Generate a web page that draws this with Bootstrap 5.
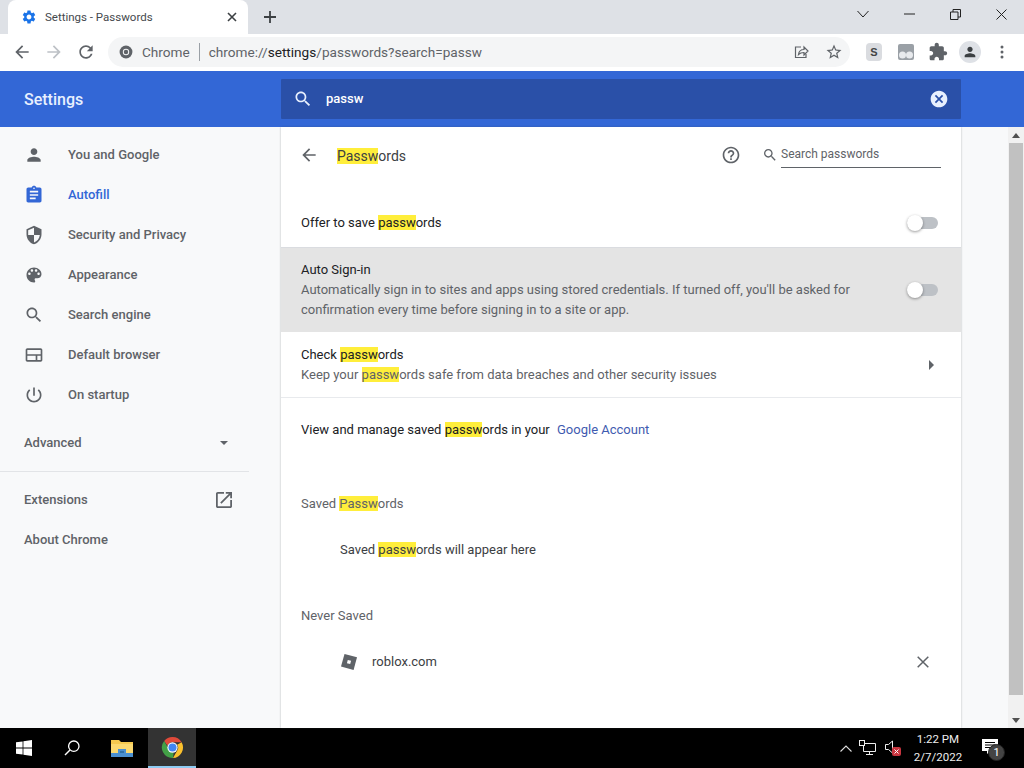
<!DOCTYPE html>
<html lang="en">
<head>
  <meta charset="UTF-8" />
  <meta name="viewport" content="width=device-width, initial-scale=1" />
  <title>Settings - Passwords</title>
  <link href="https://cdn.jsdelivr.net/npm/bootstrap@5.3.2/dist/css/bootstrap.min.css" rel="stylesheet" />
  <style>
    html, body { height: 768px; overflow: hidden; }
    body { font-family: Roboto, "Liberation Sans", sans-serif; font-size: 13px; line-height: 20px; color: #202124; background: #f8f9fa; }
    svg { display: block; flex: none; fill: currentColor; }

    /* browser chrome */
    .tab-strip { height: 34px; background: #dee1e6; padding-left: 8px; color: #3c4043; }
    .tab-item { width: 240px; height: 34px; background: #fff; border-radius: 8px 8px 0 0; padding: 0 11px 0 13px; font-size: 11.5px; color: #45494d; }
    .tab-gear { color: #1a73e8; }
    .new-tab { margin-left: 15px; }
    .win-btns { margin-top: -6px; }
    .win-btn { width: 46px; }
    .tool-bar { height: 37px; background: #fff; padding: 0 0 1px 12px; color: #5f6368; }
    .nav-ico { width: 20px; margin-right: 12px; }
    .nav-off { color: #bdc1c6; }
    .omni { width: 742px; height: 30px; background: #f4f5f6; border-radius: 15px; padding: 0 7px 0 11px; font-size: 13.6px; }
    .omni-name { margin-left: 9px; }
    .omni-sep { width: 1px; height: 18px; background: #9aa0a6; margin: 0 9px; }
    .omni-url b { font-weight: 400; color: #202124; }
    .omni-star { margin-left: 16px; }
    .ext-s { width: 16px; height: 18px; margin-left: 16px; border-radius: 4px; background: #dadce0; font: 700 11px/18px "Liberation Sans", sans-serif; color: #444; text-align: center; }
    .ext-tab { margin-left: 16px; }
    .ext-puzzle { margin-left: 14px; }
    .avatar-btn { width: 22px; height: 22px; margin-left: 11px; border-radius: 50%; background: #dee1e6; color: #3c4043; }
    .menu-dots { margin-left: 19px; }

    /* settings header */
    .app-head { height: 56px; background: #3367d6; color: #fff; }
    .app-title { width: 281px; padding-left: 24px; padding-top: 1px; font-size: 16px; font-weight: 500; color: #e8f0fe; }
    .app-search { width: 680px; height: 40px; background: #2a50a8; border-radius: 1px; padding: 0 12px; font-weight: 500; }
    .app-search svg { color: #e8f0fe; }
    .app-query { margin-left: 13px; }

    /* sidebar */
    .app-body { height: 601px; }
    .side-nav { width: 281px; padding-top: 8px; color: #5f6368; font-weight: 500; }
    .side-item { height: 40px; padding-left: 24px; }
    .side-item svg { margin-right: 24px; }
    .side-item.active { color: #3367d6; }
    .side-plain { height: 40px; padding: 0 49px 0 24px; }
    .side-adv { margin-top: 8px; padding-right: 53px; }
    .side-rule { width: 249px; height: 1px; background: #e2e4e7; margin: 8px 0; }

    /* passwords page */
    .page-panel { width: 680px; background: #fff; box-shadow: 0 0 2px rgba(60,64,67,.35); }
    .page-head { height: 58px; margin-bottom: 13px; padding: 0 20px; }
    .head-ico { color: #5f6368; margin-top: -2px; }
    .head-back { margin-left: -2px; }
    .head-help { margin-right: 21px; }
    .head-find { margin-right: 3px; }
    .page-title { font-size: 14px; margin: -1px 0 0 18px; color: #3c4043; }
    .pw-search { width: 160px; height: 24px; border-bottom: 1px solid #5f6368; color: #5f6368; font-size: 12px; }
    .hl { background: #ffee3b; }
    .set-row { padding: 0 20px; }
    .row-offer { height: 50px; border-bottom: 1px solid #dadce0; }
    .row-auto { height: 84px; background: #e4e4e4; }
    .row-check { height: 66px; border-bottom: 1px solid #e8eaed; }
    .row-view { height: 64px; }
    .sub-text { color: #5f6368; }
    .sw-track { width: 31px; height: 12px; border-radius: 6px; background: #bdc1c6; position: relative; flex: none; margin-right: 3px; }
    .sw-knob { width: 16px; height: 16px; border-radius: 50%; background: #fff; box-shadow: 0 1px 3px rgba(0,0,0,.4); position: absolute; left: 0; top: -2px; }
    .row-arrow { color: #5f6368; margin-right: 7px; }
    .acct-link { color: #3f5bb0; margin-left: 4px; text-decoration: none; }
    .sec-title { height: 40px; padding: 0 20px; color: #5f6368; }
    .sec-saved { margin-top: 22px; }
    .sec-never { margin-top: 26px; }
    .empty-line { height: 40px; padding-left: 59px; margin-top: 6px; color: #3c4043; }
    .site-row { height: 52px; padding: 0 32px 0 60px; color: #3c4043; }
    .site-ico { width: 16px; height: 16px; margin-right: 15px; }

    /* page scrollbar */
    .page-gap { width: 47px; }
    .scroll-bar { width: 16px; background: #f1f1f1; color: #505050; }
    .scroll-thumb { flex: 1; background: #c1c1c1; width: 14px; margin: 0 1px 17px; }
    .scroll-arrow { height: 16px; }

    /* windows taskbar */
    .task-bar { height: 40px; background: #000; color: #fff; }
    .task-btn { width: 48px; height: 40px; }
    .task-wide { width: 52px; }
    .task-active { background: #333; border-bottom: 2px solid #8ecbf2; }
    .tray { margin-right: 14px; }
    .tray-net { margin-left: 7px; }
    .tray-sound { position: relative; margin-left: 9px; width: 17px; height: 16px; }
    .tray-mute { position: absolute; left: 7px; top: 7px; }
    .task-clock { width: 72px; font-size: 11.5px; line-height: 18px; text-align: center; color: #eee; }
    .notif-wrap { width: 36px; height: 40px; position: relative; }
    .notif-ico { margin: -4px 4px 0 0; }
    .notif-count { position: absolute; left: 14px; top: 16px; width: 17px; height: 17px; border-radius: 50%; background: #444; border: 1px solid #222; font-size: 11px; line-height: 15px; text-align: center; color: #fff; }
  </style>
</head>
<body>
  <!-- Tabs -->
  <div class="tab-strip d-flex align-items-center">
    <div class="tab-item d-flex align-items-center">
      <svg class="tab-gear" width="16" height="16" viewBox="0 0 24 24"><path d="M19.14 12.94c.04-.3.06-.61.06-.94 0-.32-.02-.64-.07-.94l2.03-1.58a.49.49 0 0 0 .12-.61l-1.92-3.32a.488.488 0 0 0-.59-.22l-2.39.96c-.5-.38-1.03-.7-1.62-.94l-.36-2.54a.484.484 0 0 0-.48-.41h-3.84c-.24 0-.43.17-.47.41l-.36 2.54c-.59.24-1.13.57-1.62.94l-2.39-.96c-.22-.08-.47 0-.59.22L2.74 8.87c-.12.21-.08.47.12.61l2.03 1.58c-.05.3-.09.63-.09.94s.02.64.07.94l-2.03 1.58a.49.49 0 0 0-.12.61l1.92 3.32c.12.22.37.29.59.22l2.39-.96c.5.38 1.03.7 1.62.94l.36 2.54c.05.24.24.41.48.41h3.84c.24 0 .44-.17.47-.41l.36-2.54c.59-.24 1.13-.56 1.62-.94l2.39.96c.22.08.47 0 .59-.22l1.92-3.32c.12-.22.07-.47-.12-.61l-2.01-1.58zM12 15.6c-1.98 0-3.6-1.62-3.6-3.6s1.62-3.6 3.6-3.6 3.6 1.62 3.6 3.6-1.62 3.6-3.6 3.6z"/></svg>
      <span class="ms-2 flex-grow-1">Settings - Passwords</span>
      <svg width="10" height="10" viewBox="0 0 10 10"><path d="M1 1l8 8M9 1l-8 8" stroke="#3c4043" stroke-width="1.6" fill="none"/></svg>
    </div>
    <svg class="new-tab" width="14" height="14" viewBox="0 0 14 14"><path d="M7 1v12M1 7h12" stroke="#3c4043" stroke-width="1.8" fill="none"/></svg>
    <div class="win-btns ms-auto d-flex align-items-center">
      <div class="win-btn d-flex justify-content-center"><svg width="12" height="8" viewBox="0 0 12 8"><path d="M.5 1l5.500 6 5.500-6" stroke="#222" fill="none"/></svg></div>
      <div class="win-btn d-flex justify-content-center"><svg width="11" height="2" viewBox="0 0 11 2"><path d="M0 1h11" stroke="#222" fill="none"/></svg></div>
      <div class="win-btn d-flex justify-content-center"><svg width="11" height="11" viewBox="0 0 11 11"><path d="M.5 3H8v7.500H.5zM3 3V.5h7.500V8H8" stroke="#222" fill="none"/></svg></div>
      <div class="win-btn d-flex justify-content-center"><svg width="11" height="11" viewBox="0 0 11 11"><path d="M.5.5l10 10M10.500.5l-10 10" stroke="#222" fill="none"/></svg></div>
    </div>
  </div>

  <!-- Toolbar -->
  <div class="tool-bar d-flex align-items-center">
    <svg class="nav-ico" width="20" height="20" viewBox="0 0 24 24"><path d="M20 11H7.830l5.590-5.590L12 4l-8 8 8 8 1.410-1.410L7.830 13H20v-2z"/></svg>
    <svg class="nav-ico nav-off" width="20" height="20" viewBox="0 0 24 24"><path d="M12 4l-1.410 1.410L16.170 11H4v2h12.170l-5.580 5.590L12 20l8-8z"/></svg>
    <svg class="nav-ico" width="20" height="20" viewBox="0 0 24 24"><path d="M17.650 6.350C16.200 4.900 14.210 4 12 4c-4.420 0-7.990 3.580-7.990 8s3.570 8 7.990 8c3.730 0 6.840-2.550 7.730-6h-2.080c-.82 2.330-3.040 4-5.650 4-3.310 0-6-2.690-6-6s2.690-6 6-6c1.660 0 3.140.69 4.220 1.780L13 11h7V4l-2.350 2.350z"/></svg>
    <div class="omni d-flex align-items-center">
      <svg width="14" height="14" viewBox="0 0 24 24"><circle cx="12" cy="12" r="11"/><circle cx="12" cy="12" r="5.500" fill="#f4f5f6"/><circle cx="12" cy="12" r="3.800"/></svg>
      <span class="omni-name">Chrome</span>
      <span class="omni-sep"></span>
      <span class="omni-url">chrome://<b>settings</b>/passwords?search=passw</span>
      <svg class="ms-auto" width="16" height="16" viewBox="0 0 16 16"><path d="M8 3H2.500v10.500H13V10" stroke="#5f6368" stroke-width="1.200" fill="none"/><path d="M5.500 10.500c.4-3 2.500-5 5.500-5V3l4 4-4 4V8.500c-2.200 0-4 .5-5.500 2z" stroke="#5f6368" stroke-width="1.200" fill="none"/></svg>
      <svg class="omni-star" width="18" height="18" viewBox="0 0 24 24"><path d="M22 9.240l-7.190-.62L12 2 9.190 8.630 2 9.240l5.460 4.730L5.820 21 12 17.270 18.180 21l-1.630-7.030L22 9.240zM12 15.400l-3.760 2.270 1-4.280-3.320-2.880 4.380-.38L12 6.100l1.710 4.040 4.380.38-3.320 2.880 1 4.280L12 15.400z"/></svg>
    </div>
    <div class="ext-s">S</div>
    <svg class="ext-tab" width="16" height="16" viewBox="0 0 16 16"><rect width="16" height="16" rx="2" fill="#9aa0a6"/><circle cx="4.500" cy="11" r="3.500" fill="#e8eaed"/><circle cx="11.500" cy="11" r="3.500" fill="#e8eaed"/></svg>
    <svg class="ext-puzzle" width="20" height="20" viewBox="0 0 24 24"><path d="M20.500 11H19V7c0-1.100-.9-2-2-2h-4V3.500C13 2.120 11.880 1 10.500 1S8 2.120 8 3.500V5H4c-1.100 0-1.990.9-1.990 2v3.800H3.500c1.490 0 2.700 1.210 2.700 2.700s-1.210 2.700-2.700 2.700H2V20c0 1.100.9 2 2 2h3.800v-1.500c0-1.490 1.210-2.700 2.700-2.700 1.490 0 2.700 1.210 2.700 2.700V22H17c1.100 0 2-.9 2-2v-4h1.500c1.380 0 2.500-1.120 2.500-2.500S21.880 11 20.500 11z"/></svg>
    <div class="avatar-btn d-flex align-items-center justify-content-center"><svg width="16" height="16" viewBox="0 0 24 24"><path d="M12 12c2.210 0 4-1.790 4-4s-1.790-4-4-4-4 1.790-4 4 1.790 4 4 4zm0 2c-2.670 0-8 1.340-8 4v2h16v-2c0-2.660-5.330-4-8-4z"/></svg></div>
    <svg class="menu-dots" width="4" height="14" viewBox="0 0 4 14"><circle cx="2" cy="2" r="1.500"/><circle cx="2" cy="7" r="1.500"/><circle cx="2" cy="12" r="1.500"/></svg>
  </div>

  <!-- Settings header -->
  <div class="app-head d-flex align-items-center">
    <div class="app-title">Settings</div>
    <div class="app-search d-flex align-items-center">
      <svg width="20" height="20" viewBox="0 0 24 24"><path d="M15.500 14h-.79l-.28-.27C15.410 12.590 16 11.110 16 9.500 16 5.910 13.090 3 9.500 3S3 5.910 3 9.500 5.910 16 9.500 16c1.610 0 3.090-.59 4.230-1.570l.27.280v.79l5 4.990L20.490 19l-4.990-5zm-6 0C7.010 14 5 11.990 5 9.500S7.010 5 9.500 5 14 7.010 14 9.500 11.990 14 9.500 14z"/></svg>
      <span class="app-query flex-grow-1">passw</span>
      <svg width="20" height="20" viewBox="0 0 24 24"><path d="M12 2C6.470 2 2 6.470 2 12s4.470 10 10 10 10-4.470 10-10S17.530 2 12 2zm5 13.590L15.590 17 12 13.410 8.410 17 7 15.590 10.590 12 7 8.410 8.410 7 12 10.590 15.590 7 17 8.410 13.410 12 17 15.590z"/></svg>
    </div>
  </div>

  <div class="app-body d-flex">
    <!-- Sidebar -->
    <nav class="side-nav">
      <div class="side-item d-flex align-items-center"><svg width="20" height="20" viewBox="0 0 24 24"><path d="M12 12c2.210 0 4-1.790 4-4s-1.790-4-4-4-4 1.790-4 4 1.790 4 4 4zm0 2c-2.670 0-8 1.340-8 4v2h16v-2c0-2.660-5.330-4-8-4z"/></svg>You and Google</div>
      <div class="side-item active d-flex align-items-center"><svg width="20" height="20" viewBox="0 0 24 24"><path d="M19 3h-4.180C14.400 1.840 13.300 1 12 1c-1.300 0-2.400.84-2.820 2H5c-1.100 0-2 .9-2 2v14c0 1.100.9 2 2 2h14c1.100 0 2-.9 2-2V5c0-1.100-.9-2-2-2zm-7 0c.55 0 1 .45 1 1s-.45 1-1 1-1-.45-1-1 .45-1 1-1zm2 14H7v-2h7v2zm3-4H7v-2h10v2zm0-4H7V7h10v2z"/></svg>Autofill</div>
      <div class="side-item d-flex align-items-center"><svg width="20" height="20" viewBox="0 0 24 24"><path d="M12 1L3 5v6c0 5.550 3.840 10.740 9 12 5.160-1.260 9-6.450 9-12V5l-9-4zm0 10.990h7c-.53 4.120-3.280 7.790-7 8.940V12H5V6.300l7-3.110v8.800z"/></svg>Security and Privacy</div>
      <div class="side-item d-flex align-items-center"><svg width="20" height="20" viewBox="0 0 24 24"><path d="M12 3c-4.970 0-9 4.030-9 9s4.030 9 9 9c.83 0 1.500-.67 1.500-1.500 0-.39-.15-.74-.39-1.010-.23-.26-.38-.61-.38-.99 0-.83.67-1.500 1.500-1.500H16c2.760 0 5-2.240 5-5 0-4.420-4.030-8-9-8zm-5.500 9c-.83 0-1.500-.67-1.500-1.500S5.670 9 6.500 9 8 9.670 8 10.500 7.330 12 6.500 12zm3-4C8.670 8 8 7.330 8 6.500S8.670 5 9.500 5s1.500.67 1.500 1.500S10.330 8 9.500 8zm5 0c-.83 0-1.500-.67-1.500-1.500S13.670 5 14.500 5s1.500.67 1.500 1.500S15.330 8 14.500 8zm3 4c-.83 0-1.500-.67-1.500-1.500S16.670 9 17.500 9s1.500.67 1.500 1.500-.67 1.500-1.500 1.500z"/></svg>Appearance</div>
      <div class="side-item d-flex align-items-center"><svg width="20" height="20" viewBox="0 0 24 24"><path d="M15.500 14h-.79l-.28-.27C15.410 12.590 16 11.110 16 9.500 16 5.910 13.090 3 9.500 3S3 5.910 3 9.500 5.910 16 9.500 16c1.610 0 3.090-.59 4.230-1.570l.27.280v.79l5 4.990L20.490 19l-4.990-5zm-6 0C7.010 14 5 11.990 5 9.500S7.010 5 9.500 5 14 7.010 14 9.500 11.990 14 9.500 14z"/></svg>Search engine</div>
      <div class="side-item d-flex align-items-center"><svg width="20" height="20" viewBox="0 0 24 24"><path d="M20 4H4c-1.100 0-1.990.9-1.990 2L2 18c0 1.100.9 2 2 2h16c1.100 0 2-.9 2-2V6c0-1.100-.9-2-2-2zm0 14h-4v-5h4v5zm-6 0H4v-5h10v5zm6-7H4V6h16v5z"/></svg>Default browser</div>
      <div class="side-item d-flex align-items-center"><svg width="20" height="20" viewBox="0 0 24 24"><path d="M13 3h-2v10h2V3zm4.830 2.170l-1.420 1.420C17.990 7.860 19 9.810 19 12c0 3.870-3.130 7-7 7s-7-3.130-7-7c0-2.190 1.010-4.140 2.580-5.420L6.170 5.170C4.230 6.820 3 9.260 3 12c0 4.970 4.030 9 9 9s9-4.030 9-9c0-2.740-1.230-5.180-3.170-6.830z"/></svg>On startup</div>
      <div class="side-plain side-adv d-flex align-items-center justify-content-between"><span>Advanced</span><svg width="8" height="4" viewBox="0 0 10 5"><path d="M0 0h10L5 5z"/></svg></div>
      <div class="side-rule"></div>
      <div class="side-plain d-flex align-items-center justify-content-between"><span>Extensions</span><svg width="16" height="16" viewBox="3 3 18 18"><path d="M19 19H5V5h7V3H5c-1.110 0-2 .9-2 2v14c0 1.100.89 2 2 2h14c1.100 0 2-.9 2-2v-7h-2v7zM14 3v2h3.590l-9.830 9.830 1.410 1.410L19 6.410V10h2V3h-7z"/></svg></div>
      <div class="side-plain d-flex align-items-center">About Chrome</div>
    </nav>

    <!-- Passwords page -->
    <main class="page-panel">
      <div class="page-head d-flex align-items-center">
        <svg class="head-ico head-back" width="20" height="20" viewBox="0 0 24 24"><path d="M20 11H7.830l5.590-5.590L12 4l-8 8 8 8 1.410-1.410L7.830 13H20v-2z"/></svg>
        <div class="page-title"><span class="hl">Passw</span>ords</div>
        <svg class="head-ico head-help ms-auto" width="20" height="20" viewBox="0 0 24 24"><path d="M11 18h2v-2h-2v2zm1-16C6.480 2 2 6.480 2 12s4.480 10 10 10 10-4.480 10-10S17.520 2 12 2zm0 18c-4.410 0-8-3.590-8-8s3.590-8 8-8 8 3.590 8 8-3.590 8-8 8zm0-14c-2.210 0-4 1.790-4 4h2c0-1.100.9-2 2-2s2 .9 2 2c0 2-3 1.750-3 5h2c0-2.250 3-2.500 3-5 0-2.210-1.790-4-4-4z"/></svg>
        <svg class="head-ico head-find" width="16" height="16" viewBox="0 0 24 24"><path d="M15.500 14h-.79l-.28-.27C15.410 12.590 16 11.110 16 9.500 16 5.910 13.090 3 9.500 3S3 5.910 3 9.500 5.910 16 9.500 16c1.610 0 3.090-.59 4.230-1.570l.27.280v.79l5 4.990L20.490 19l-4.990-5zm-6 0C7.010 14 5 11.990 5 9.500S7.010 5 9.500 5 14 7.010 14 9.500 11.990 14 9.500 14z"/></svg>
        <div class="pw-search">Search passwords</div>
      </div>

      <div class="set-row row-offer d-flex align-items-center justify-content-between">
        <div>Offer to save <span class="hl">passw</span>ords</div>
        <div class="sw-track"><div class="sw-knob"></div></div>
      </div>
      <div class="set-row row-auto d-flex align-items-center justify-content-between">
        <div>
          <div>Auto Sign-in</div>
          <div class="sub-text">Automatically sign in to sites and apps using stored credentials. If turned off, you'll be asked for<br>confirmation every time before signing in to a site or app.</div>
        </div>
        <div class="sw-track"><div class="sw-knob"></div></div>
      </div>
      <div class="set-row row-check d-flex align-items-center justify-content-between">
        <div>
          <div>Check <span class="hl">passw</span>ords</div>
          <div class="sub-text">Keep your <span class="hl">passw</span>ords safe from data breaches and other security issues</div>
        </div>
        <svg class="row-arrow" width="5" height="10" viewBox="0 0 5 10"><path d="M0 0l5 5-5 5z"/></svg>
      </div>
      <div class="set-row row-view d-flex align-items-center">
        <div>View and manage saved <span class="hl">passw</span>ords in your <a class="acct-link" href="#">Google Account</a></div>
      </div>
      <div class="sec-title sec-saved d-flex align-items-center">
        <div>Saved <span class="hl">Passw</span>ords</div>
      </div>
      <div class="empty-line d-flex align-items-center">
        <div>Saved <span class="hl">passw</span>ords will appear here</div>
      </div>
      <div class="sec-title sec-never d-flex align-items-center">Never Saved</div>
      <div class="site-row d-flex align-items-center">
        <svg class="site-ico" viewBox="0 0 16 16"><path d="M3.500 0L16 3.300 12.600 16 0 12.600z" fill="#5f6368"/><rect x="6.300" y="6.300" width="3.400" height="3.400" fill="#fff" transform="rotate(15 8 8)"/></svg>
        <span class="flex-grow-1">roblox.com</span>
        <svg width="12" height="12" viewBox="0 0 12 12"><path d="M.7.7l10.600 10.600M11.300.7L.7 11.300" stroke="#5f6368" stroke-width="1.500" fill="none"/></svg>
      </div>
    </main>

    <div class="page-gap"></div>
    <div class="scroll-bar d-flex flex-column">
      <div class="scroll-arrow d-flex align-items-center justify-content-center"><svg width="8" height="5" viewBox="0 0 8 5"><path d="M4 0l4 5H0z"/></svg></div>
      <div class="scroll-thumb"></div>
      <div class="scroll-arrow d-flex align-items-center justify-content-center"><svg width="8" height="5" viewBox="0 0 8 5"><path d="M0 0h8L4 5z"/></svg></div>
    </div>
  </div>

  <!-- Taskbar -->
  <div class="task-bar d-flex align-items-center">
    <div class="task-btn d-flex align-items-center justify-content-center"><svg width="16" height="16" viewBox="0 0 16 16"><path d="M0 2.300l6.600-.9v6.200H0zM7.400 1.300L16 0v7.600H7.400zM0 8.400h6.600v6.200L0 13.700zM7.400 8.400H16V16l-8.600-1.300z"/></svg></div>
    <div class="task-btn d-flex align-items-center justify-content-center"><svg width="16" height="16" viewBox="0 0 16 16"><circle cx="9.800" cy="6.200" r="5.200" fill="none" stroke="#fff" stroke-width="1.300"/><path d="M6 10L1 15" stroke="#fff" stroke-width="1.500"/></svg></div>
    <div class="task-btn task-wide d-flex align-items-center justify-content-center"><svg width="22" height="18" viewBox="0 0 22 18"><path d="M0 1h8l2 2h12v15H0z" fill="#f5c94f"/><path d="M0 5h22v13H0z" fill="#fbd970"/><path d="M0 14h7v-4h8v4h7v4H0z" fill="#4a8fd0"/><path d="M9 14v-2h4v2z" fill="#2f6fa8"/></svg></div>
    <div class="task-btn task-active d-flex align-items-center justify-content-center">
      <svg width="23" height="23" viewBox="0 0 24 24"><path d="M12 1a11 11 0 0 1 9.530 5.500H12A5.500 5.500 0 0 0 6.800 10.200L3.300 5.200A11 11 0 0 1 12 1z" fill="#e04a3a"/><path d="M21.530 6.500A11 11 0 0 1 12.500 23l4.300-7.500A5.500 5.500 0 0 0 16.800 9z" fill="#fbc02d"/><path d="M3.300 5.200l4.700 8.300a5.500 5.500 0 0 0 5.200 3.900L12.500 23A11 11 0 0 1 3.300 5.200z" fill="#43a047"/><circle cx="12" cy="12" r="5.400" fill="#fff"/><circle cx="12" cy="12" r="4.200" fill="#4285f4"/></svg>
    </div>
    <div class="tray ms-auto d-flex align-items-center">
      <svg width="12" height="7" viewBox="0 0 12 7"><path d="M.5 6.500L6 1l5.500 5.500" stroke="#ddd" stroke-width="1.100" fill="none"/></svg>
      <svg class="tray-net" width="17" height="16" viewBox="0 0 17 16"><path d="M4.500 3.500h12v8h-12zM10.500 11.500v3M7 14.500h7" stroke="#eee" fill="none"/><rect x=".5" y=".5" width="5" height="5" fill="#000" stroke="#eee"/></svg>
      <div class="tray-sound">
        <svg width="8" height="14" viewBox="0 0 8 14"><path d="M.5 4.500h3L7.500 1v12l-4-3.500h-3z" stroke="#eee" fill="none"/></svg>
        <svg class="tray-mute" width="9" height="9" viewBox="0 0 9 9"><rect width="9" height="9" rx="2" fill="#c8353f"/><path d="M2.500 2.500l4 4M6.500 2.500l-4 4" stroke="#fff"/></svg>
      </div>
      <div class="task-clock"><div>1:22 PM</div><div>2/7/2022</div></div>
      <div class="notif-wrap d-flex align-items-center justify-content-center">
        <svg class="notif-ico" width="16" height="15" viewBox="0 0 16 15"><path d="M0 0h16v12H8l-3 3v-3H0z"/><path d="M3 3.500h10M3 6h10M3 8.500h7" stroke="#000"/></svg>
        <div class="notif-count">1</div>
      </div>
    </div>
  </div>

  <script src="https://cdn.jsdelivr.net/npm/bootstrap@5.3.2/dist/js/bootstrap.bundle.min.js"></script>
</body>
</html>
